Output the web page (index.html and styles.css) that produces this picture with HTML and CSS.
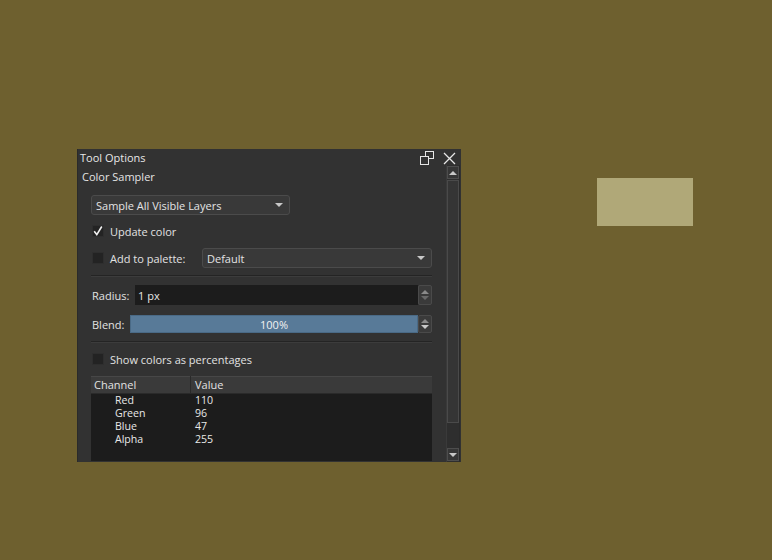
FILE: index.html
```html
<!DOCTYPE html>
<html>
<head>
<meta charset="utf-8">
<link rel="stylesheet" href="styles.css">
</head>
<body>
<div class="desktop">
  <div class="panel">
    <div class="titlebar">
      <span class="title">Tool Options</span>
      <span class="tb-icons">
        <svg class="float-ic" width="14" height="14" viewBox="0 0 14 14"><rect x="5.5" y="0.5" width="8" height="7" fill="none" stroke="#e6e6e6"/><rect x="0.5" y="5.5" width="8" height="8" fill="#333" stroke="#e6e6e6"/></svg>
        <svg class="close-ic" width="13" height="13" viewBox="0 0 13 13"><path d="M1 1L12 12M12 1L1 12" stroke="#e6e6e6" stroke-width="1.3"/></svg>
      </span>
    </div>
    <div class="body">
      <div class="main">
        <div class="header">Color Sampler</div>
        <div class="group">
          <div class="combo combo-sample"><span>Sample All Visible Layers</span><i class="arrow"></i></div>
          <div class="row row-update">
            <span class="check"><svg width="12" height="12" viewBox="0 0 12 12"><path d="M2.2 6.2L4.8 9.6L9.8 1.5" fill="none" stroke="#f0f0f0" stroke-width="1.6"/></svg></span>
            <span class="label">Update color</span>
          </div>
          <div class="row row-palette">
            <span class="check"></span>
            <span class="label label-palette">Add to palette:</span>
            <div class="combo combo-default"><span>Default</span><i class="arrow"></i></div>
          </div>
          <div class="sep sep1"></div>
          <div class="row row-radius">
            <span class="label label-radius">Radius:</span>
            <div class="field"><span>1 px</span></div>
            <div class="spin"><i class="up"></i><i class="down"></i></div>
          </div>
          <div class="row row-blend">
            <span class="label label-blend">Blend:</span>
            <div class="field blend"><span>100%</span></div>
            <div class="spin"><i class="up"></i><i class="down bright"></i></div>
          </div>
          <div class="sep sep2"></div>
          <div class="row row-percent">
            <span class="check"></span>
            <span class="label">Show colors as percentages</span>
          </div>
          <div class="table">
            <div class="thead">
              <div class="th th-channel">Channel</div>
              <div class="th th-value">Value</div>
            </div>
            <div class="tbody">
              <div class="tr"><span class="td-ch">Red</span><span class="td-val">110</span></div>
              <div class="tr"><span class="td-ch">Green</span><span class="td-val">96</span></div>
              <div class="tr"><span class="td-ch">Blue</span><span class="td-val">47</span></div>
              <div class="tr"><span class="td-ch">Alpha</span><span class="td-val">255</span></div>
            </div>
          </div>
        </div>
      </div>
      <div class="scrollbar">
        <div class="sb-btn"><i class="sb-up"></i></div>
        <div class="sb-track">
          <div class="sb-handle"></div>
        </div>
        <div class="sb-btn sb-btn-down"><i class="sb-down"></i></div>
      </div>
    </div>
  </div>
  <div class="swatch"></div>
</div>
</body>
</html>
```
FILE: styles.css
```css
html, body {
  margin: 0;
  padding: 0;
}
body {
  background: #6e602f;
  font-family: "Open Sans", "DejaVu Sans", sans-serif;
  font-size: 11px;
  color: #e2e2e2;
}
.desktop {
  position: relative;
  width: 772px;
  height: 560px;
  overflow: hidden;
}
.panel {
  position: absolute;
  left: 77px;
  top: 149px;
  width: 384px;
  height: 313px;
  background: #323232;
  box-shadow: inset 1px 0 0 #2a2a2a;
  display: flex;
  flex-direction: column;
}
.swatch {
  position: absolute;
  left: 597px;
  top: 178px;
  width: 96px;
  height: 48px;
  background: #b0a878;
}
.titlebar {
  box-sizing: border-box;
  height: 16px;
  display: flex;
  align-items: center;
  justify-content: space-between;
  padding-left: 3px;
  padding-right: 5px;
}
.title {
  font-size: 11px;
  line-height: 16px;
  padding-top: 2px;
  color: #e8e8e8;
}
.tb-icons {
  display: flex;
  align-items: center;
  gap: 9px;
  padding-top: 2px;
}
.float-ic { display: block; }
.close-ic { display: block; }
.body {
  flex: 1;
  display: flex;
}
.main {
  width: 369px;
  display: flex;
  flex-direction: column;
}
.header {
  height: 24px;
  line-height: 24px;
  padding-left: 5px;
  color: #e4e4e4;
}
.group {
  padding-left: 14px;
  padding-right: 14px;
  display: flex;
  flex-direction: column;
}
.combo {
  box-sizing: border-box;
  height: 20px;
  background: #393939;
  border: 1px solid #4b4b4b;
  border-radius: 3px;
  display: flex;
  align-items: center;
  justify-content: space-between;
  padding-left: 4px;
  padding-right: 6px;
  color: #e4e4e4;
}
.combo-sample {
  margin-top: 6px;
  width: 199px;
}
.arrow {
  width: 0;
  height: 0;
  border-left: 4px solid transparent;
  border-right: 4px solid transparent;
  border-top: 4px solid #c8c8c8;
}
.row {
  display: flex;
  align-items: center;
  height: 20px;
}
.row-update { margin-top: 6px; }
.row-palette { margin-top: 7px; }
.check {
  box-sizing: border-box;
  width: 12px;
  height: 12px;
  margin-left: 1px;
  background: #232323;
  border: 1px solid #2e2e2e;
  display: flex;
  align-items: center;
  justify-content: center;
}
.check svg { display: block; flex: none; }
.label {
  margin-left: 6px;
  color: #e2e2e2;
}
.label-palette {
  width: 92px;
}
.combo-default {
  flex: 1;
  padding-right: 6px;
}
.sep {
  height: 0;
  border-top: 1px solid #242424;
  border-bottom: 1px solid #3c3c3c;
}
.sep1 { margin-top: 7px; }
.sep2 { margin-top: 8px; }
.row-radius { margin-top: 8px; }
.row-blend { margin-top: 10px; height: 18px; }
.label-radius { margin-left: 1px; width: 43px; }
.label-blend { margin-left: 1px; width: 38px; }
.field {
  flex: 1;
  align-self: stretch;
  background: #1c1c1c;
  display: flex;
  align-items: center;
  padding-left: 3px;
  color: #e6e6e6;
}
.field.blend {
  background: #587a98;
  justify-content: center;
  padding-left: 0;
  color: #f2f2f2;
  box-shadow: inset 0 0 0 1px #4a6a86;
}
.spin {
  box-sizing: border-box;
  width: 14px;
  align-self: stretch;
  background: #3a3a3a;
  border: 1px solid #4a4a4a;
  border-radius: 2px;
  display: flex;
  flex-direction: column;
  align-items: center;
  justify-content: center;
  gap: 2px;
}
.spin .up {
  width: 0;
  height: 0;
  border-left: 4px solid transparent;
  border-right: 4px solid transparent;
  border-bottom: 4px solid #8a8a8a;
}
.spin .down {
  width: 0;
  height: 0;
  border-left: 4px solid transparent;
  border-right: 4px solid transparent;
  border-top: 4px solid #6a6a6a;
}
.spin .down.bright { border-top-color: #c8c8c8; }
.row-percent { margin-top: 6px; }
.table {
  margin-top: 7px;
  display: flex;
  flex-direction: column;
  height: 85px;
}
.thead {
  height: 17px;
  display: flex;
  background: #3a3a3a;
  box-shadow: inset 0 1px 0 #474747;
  border-bottom: 1px solid #2a2a2a;
}
.th {
  line-height: 17px;
  color: #e2e2e2;
}
.th-channel {
  width: 96px;
  padding-left: 3px;
  border-right: 1px solid #2a2a2a;
}
.th-value {
  padding-left: 4px;
}
.tbody {
  flex: 1;
  background: #1c1c1c;
  padding-top: 0;
}
.tr {
  display: flex;
  height: 13px;
  line-height: 13px;
  font-size: 10.6px;
  color: #e8e8e8;
}
.td-ch {
  width: 80px;
  padding-left: 24px;
}
.td-val {
  padding-left: 0;
}
.scrollbar {
  width: 14px;
  margin-left: 0;
  padding-top: 1px;
  box-sizing: border-box;
  display: flex;
  flex-direction: column;
  background: #2e2e2e;
  border-left: 1px solid #3a3a3a;
  border-right: 1px solid #2a2a2a;
}
.sb-btn {
  box-sizing: border-box;
  height: 13px;
  border: 1px solid #4d4d4d;
  background: #363636;
  display: flex;
  align-items: center;
  justify-content: center;
}
.sb-btn-down {
  margin-bottom: 1px;
}
.sb-up {
  width: 0;
  height: 0;
  border-left: 4px solid transparent;
  border-right: 4px solid transparent;
  border-bottom: 4px solid #c8c8c8;
}
.sb-down {
  width: 0;
  height: 0;
  border-left: 4px solid transparent;
  border-right: 4px solid transparent;
  border-top: 4px solid #c8c8c8;
}
.sb-track {
  flex: 1;
  padding-top: 1px;
  padding-bottom: 25px;
  display: flex;
  flex-direction: column;
}
.sb-handle {
  flex: 1;
  box-sizing: border-box;
  border: 1px solid #4a4a4a;
  background: #353535;
}
```
